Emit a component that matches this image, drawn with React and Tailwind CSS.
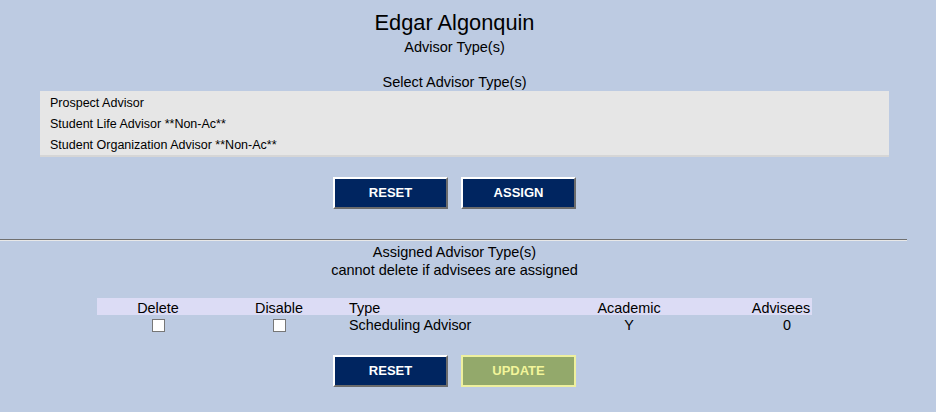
export default function App() {
  const btn =
    'w-[115px] h-[32px] flex items-center justify-center text-[13px] font-bold border-2 border-t-white border-l-white border-b-[#6b6b6b] border-r-[#6b6b6b] bg-[#002560] text-white';
  const box = 'w-[13px] h-[13px] bg-white border border-[#777] mx-auto';

  return (
    <div className="w-[936px] h-[412px] bg-[#bdcbe2] text-black overflow-hidden" style={{ fontFamily: '"Liberation Sans", Arial, sans-serif' }}>
      <div className="w-[909px] flex flex-col items-center pt-[11px]">
        <div className="text-[21.8px] leading-[23px]">Edgar Algonquin</div>
        <div className="text-[14.5px] leading-[16px] mt-[5px]">Advisor Type(s)</div>
        <div className="text-[14.5px] leading-[16px] mt-[19px]">Select Advisor Type(s)</div>
      </div>

      <div className="ml-[40px] mt-[1px] w-[849px] h-[66px] bg-[#e6e6e6] border-b-2 border-[#d6d6d6] pl-[10px] pt-[2px] text-[12.5px]">
        <div className="h-[21px] flex items-center">Prospect Advisor</div>
        <div className="h-[21px] flex items-center">Student Life Advisor **Non-Ac**</div>
        <div className="h-[21px] flex items-center">Student Organization Advisor **Non-Ac**</div>
      </div>

      <div className="w-[909px] flex justify-center gap-[13px] mt-[20px]">
        <button className={btn}>RESET</button>
        <button className={btn}>ASSIGN</button>
      </div>

      <div className="w-[907px] mt-[30px] border-t border-t-[#707070] border-b border-b-[#e8e8e8]" />

      <div className="w-[909px] flex flex-col items-center text-[14.5px] leading-[18px] mt-[2px]">
        <div>Assigned Advisor Type(s)</div>
        <div>cannot delete if advisees are assigned</div>
      </div>

      <div className="ml-[97px] mt-[19px] w-[715px] text-[14.4px]">
        <div className="grid grid-cols-[122px_120px_221px_138px_52px_62px] h-[17px] items-center bg-[#dcdcf5]">
          <div className="text-center">Delete</div>
          <div className="text-center">Disable</div>
          <div className="pl-[10px]">Type</div>
          <div className="text-center">Academic</div>
          <div />
          <div className="text-center whitespace-nowrap">Advisees</div>
        </div>
        <div className="grid grid-cols-[122px_120px_221px_138px_52px_62px] h-[17px] items-center">
          <div><div className={box} /></div>
          <div><div className={box} /></div>
          <div className="pl-[10px]">Scheduling Advisor</div>
          <div className="text-center">Y</div>
          <div />
          <div className="text-center pl-[12px]">0</div>
        </div>
      </div>

      <div className="w-[909px] flex justify-center gap-[13px] mt-[23px]">
        <button className={btn}>RESET</button>
        <button className="w-[115px] h-[32px] flex items-center justify-center text-[13px] font-bold border-2 border-[#eef09e] bg-[#93a96b] text-[#f2f59a]">
          UPDATE
        </button>
      </div>
    </div>
  );
}
